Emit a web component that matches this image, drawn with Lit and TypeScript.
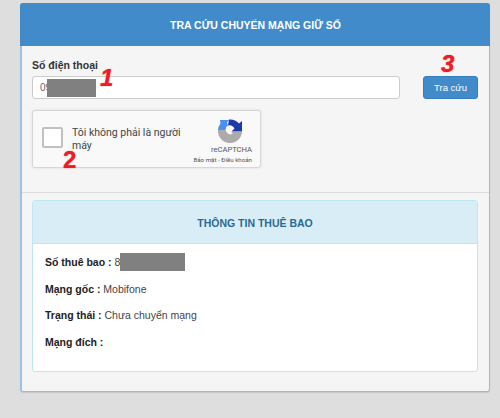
import { LitElement, html, css } from "lit";
import { customElement } from "lit/decorators.js";

@customElement("app-root")
export class AppRoot extends LitElement {
  static styles = css`
    :host { display: block; width: 500px; height: 418px; background: #dedede; overflow: hidden; font-family: "Liberation Sans", Arial, sans-serif; color: #333; }
    .wrap { padding: 3px 10px 0 20px; }
    .panel { position: relative; box-sizing: border-box; width: 470px; height: 389px; background: #f5f5f5; border: 1px solid #98b9d8; border-left: 2px solid #9cc2e6; border-radius: 3px; box-shadow: 0 1px 1px rgba(0,0,0,.1); }
    .head { height: 43px; margin: -1px -1px 0 -2px; background: #428bca; border-radius: 3px 3px 0 0; color: #fff; font-size: 10.5px; font-weight: 700; display: flex; align-items: center; justify-content: center; box-sizing: border-box; padding-top: 1px; padding-left: 1px; }
    .form { height: 147px; border-bottom: 1px solid #dcdcdc; box-sizing: border-box; padding: 11px 11px 0 10px; }
    .lbl { font-size: 10.5px; font-weight: 700; line-height: 16px; height: 19px; color: #333; }
    .line { display: flex; gap: 23px; align-items: flex-start; }
    .input { position: relative; box-sizing: border-box; width: 368px; height: 23px; background: #fff; border: 1px solid #ccc; border-radius: 3px; font-size: 10px; color: #666; line-height: 21px; padding-left: 7px; }
    .mask { position: absolute; background: #808080; }
    .m1 { left: 14px; top: 2px; width: 49px; height: 18px; }
    .btn { box-sizing: border-box; width: 55px; height: 23px; background: #428bca; border: 1px solid #357ebd; border-radius: 3px; color: #fff; font-size: 9.5px; display: flex; align-items: center; justify-content: center; }
    .captcha { position: relative; box-sizing: border-box; margin-top: 11px; width: 229px; height: 58px; background: #f9f9f9; border: 1px solid #d6d6d6; border-radius: 3px; box-shadow: 0 0 3px rgba(0,0,0,.1); display: flex; }
    .check { box-sizing: border-box; width: 21px; height: 21px; margin: 16px 0 0 9px; background: #fff; border: 2px solid #c1c1c1; border-radius: 2px; flex: none; }
    .ctext { width: 116px; margin: 15px 0 0 9px; flex: none; font-family: Roboto, "Liberation Sans", sans-serif; font-size: 10.5px; line-height: 13px; color: #444; }
    .logo { flex: 1; min-width: 0; display: flex; flex-direction: column; align-items: flex-end; padding-top: 8px; padding-right: 8px; }
    .logo svg { width: 24px; height: 24px; display: block; margin-right: 10px; }
    .rc { font-family: Roboto, "Liberation Sans", sans-serif; font-size: 7.6px; line-height: 9px; margin-top: 2px; color: #555; white-space: nowrap; }
    .terms { font-family: Roboto, "Liberation Sans", sans-serif; font-size: 6.2px; line-height: 7px; margin-top: 3px; color: #555; white-space: nowrap; }
    .info { box-sizing: border-box; margin: 7px 0 0 10px; width: 446px; height: 172px; background: #fff; border: 1px solid #bce8f1; border-radius: 3px; }
    .ihead { height: 43px; background: #d9edf7; border-bottom: 1px solid #bce8f1; color: #2a6a92; font-size: 10.5px; font-weight: 700; display: flex; align-items: center; justify-content: center; padding-top: 1px; box-sizing: border-box; margin-bottom: 5px; }
    .row { position: relative; height: 26.6px; line-height: 26.6px; padding-left: 12px; font-size: 10.5px; color: #444; }
    .row b { color: #222; font-size: 10.5px; }
    .m2 { left: 87px; top: 4px; width: 65px; height: 18px; }
    .num { position: absolute; color: #ee1c25; font-family: "Liberation Sans", sans-serif; font-weight: 700; font-style: italic; font-size: 24px; line-height: 24px; text-shadow: 0 0 1px #f33; }
    .n1 { left: 78px; top: 62px; }
    .n2 { left: 41px; top: 144px; font-style: normal; }
    .n3 { left: 419px; top: 48px; }
  `;

  render() {
    return html`<div class="wrap"><div class="panel">
      <div class="head">TRA CỨU CHUYỂN MẠNG GIỮ SỐ</div>
      <div class="form">
        <div class="lbl">Số điện thoại</div>
        <div class="line">
          <div class="input">09<span class="mask m1"></span></div>
          <div class="btn">Tra cứu</div>
        </div>
        <div class="captcha">
          <div class="check"></div>
          <div class="ctext">Tôi không phải là người máy</div>
          <div class="logo">
            <svg viewBox="0 0 24 24">
              <path fill="#ababab" d="M0 11h7.500a5 5 0 0 0 7.500 3.500l-2-1.500h11a12 12 0 0 1-24-2z"/>
              <path fill="#4a90f0" d="M2 1h9l-2 2.500 1 3a5 5 0 0 0-2.500 4.500h-7.500a12 12 0 0 1 2.500-6.500z"/>
              <path fill="#1c3aa9" d="M11 .500a12 12 0 0 1 10 4l3-2.500v10.500h-10.500l3-3a5 5 0 0 0-6.500-3z"/>
            </svg>
            <div class="rc">reCAPTCHA</div>
            <div class="terms">Bảo mật - Điều khoản</div>
          </div>
        </div>
      </div>
      <div class="info">
        <div class="ihead">THÔNG TIN THUÊ BAO</div>
        <div class="row"><b>Số thuê bao :</b> 8<span class="mask m2"></span></div>
        <div class="row"><b>Mạng gốc :</b> Mobifone</div>
        <div class="row"><b>Trạng thái :</b> Chưa chuyển mạng</div>
        <div class="row"><b>Mạng đích :</b></div>
      </div>
      <div class="num n1">1</div>
      <div class="num n2">2</div>
      <div class="num n3">3</div>
    </div></div>`;
  }
}
